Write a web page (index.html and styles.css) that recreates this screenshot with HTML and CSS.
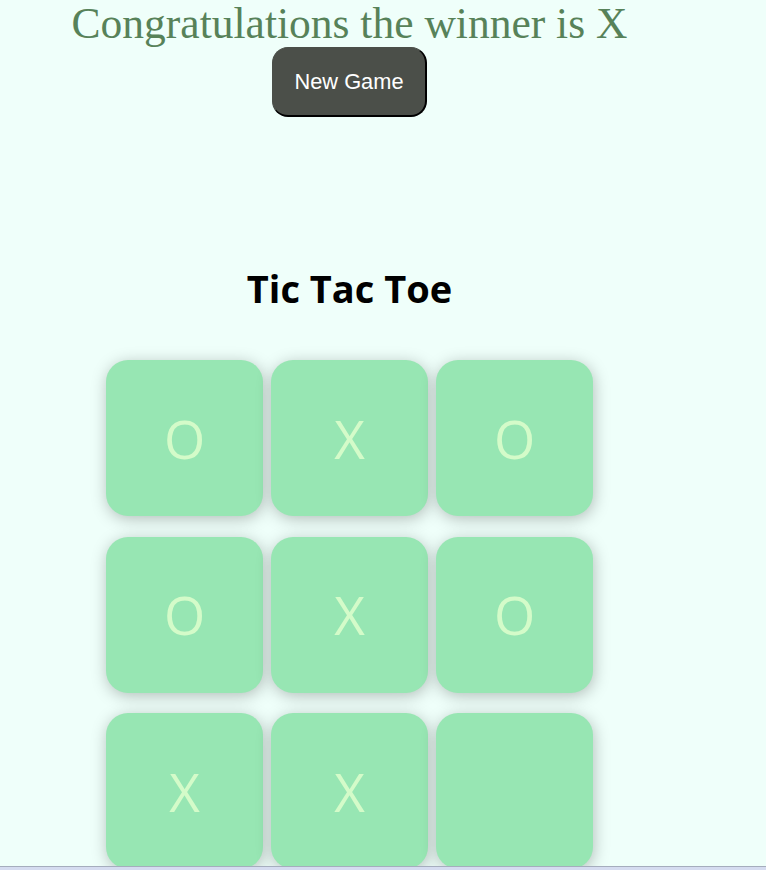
FILE: index.html
```html
<!DOCTYPE html>
<html>
<head>
<meta charset="utf-8">
<title>Tic Tac Toe</title>
<link rel="stylesheet" href="styles.css">
</head>
<body>
<div class="app">
  <p class="winner">Congratulations the winner is X</p>
  <button class="new-game">New Game</button>
  <h1 class="title">Tic Tac Toe</h1>
  <div class="board">
    <div class="cell">O</div>
    <div class="cell">X</div>
    <div class="cell">O</div>
    <div class="cell">O</div>
    <div class="cell">X</div>
    <div class="cell">O</div>
    <div class="cell">X</div>
    <div class="cell">X</div>
    <div class="cell"></div>
  </div>
</div>
<div class="bottom-bar"></div>
</body>
</html>
```
FILE: styles.css
```css
html, body {
  margin: 0;
  padding: 0;
  background: #effffa;
}
body {
  height: 870px;
  overflow: hidden;
}
.app {
  width: 699px;
  display: flex;
  flex-direction: column;
  align-items: center;
}
.winner {
  margin: 0;
  font-family: "Liberation Serif", serif;
  font-size: 43.5px;
  line-height: 47px;
  color: #578259;
}
.new-game {
  box-sizing: border-box;
  width: 155px;
  height: 70px;
  margin: 0;
  padding: 0;
  background: #4b4f49;
  color: #ffffff;
  font-family: "Liberation Sans", Arial, sans-serif;
  font-size: 21.8px;
  border-radius: 16px;
  border: 1px solid #4b4f49;
  border-right: 2px solid #000;
  border-bottom: 2px solid #000;
}
.title {
  margin: 147px 0 0 0;
  font-family: "Open Sans", sans-serif;
  font-weight: 700;
  font-size: 38px;
  line-height: 48px;
  color: #000;
}
.board {
  margin-top: 48px;
  display: grid;
  grid-template-columns: repeat(3, 157px);
  grid-auto-rows: 156px;
  column-gap: 8px;
  row-gap: 20.5px;
}
.cell {
  background: #97e6b3;
  border-radius: 22px;
  box-shadow: 1px 3px 16px rgba(0, 0, 0, 0.26);
  display: flex;
  align-items: center;
  justify-content: center;
  color: #d4fbc9;
  font-family: "Open Sans", sans-serif;
  font-size: 53px;
  font-weight: 400;
}
.bottom-bar {
  position: fixed;
  left: 0;
  right: 0;
  bottom: 0;
  height: 3px;
  background: #d5dcf0;
  border-top: 1px solid #a5adbd;
}
```
